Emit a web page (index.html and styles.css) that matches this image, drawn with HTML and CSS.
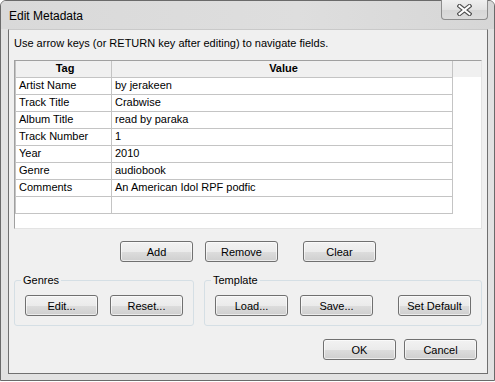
FILE: index.html
```html
<!DOCTYPE html>
<html>

<head>
  <title>Edit Metadata</title>
  <link rel="stylesheet" href="styles.css">
</head>

<body>
  <div class="window">
    <header class="titlebar">
      <span class="title">Edit Metadata</span>
      <button class="close-btn" title="Close">
        <svg width="15" height="12" viewBox="0 0 15 12">
          <path d="M2.5 2 L12.5 10 M12.5 2 L2.5 10" stroke="#505050" stroke-width="4.2" stroke-linecap="square" fill="none" />
          <path d="M2.5 2 L12.5 10 M12.5 2 L2.5 10" stroke="#fff" stroke-width="2" stroke-linecap="square" fill="none" />
        </svg>
      </button>
    </header>

    <main class="client">
      <p class="hint">Use arrow keys (or RETURN key after editing) to navigate fields.</p>

      <div class="grid-pane">
        <table class="grid">
          <thead>
            <tr>
              <th class="col-tag">Tag</th>
              <th class="col-value">Value</th>
            </tr>
          </thead>
          <tbody>
            <tr><td>Artist Name</td><td>by jerakeen</td></tr>
            <tr><td>Track Title</td><td>Crabwise</td></tr>
            <tr><td>Album Title</td><td>read by paraka</td></tr>
            <tr><td>Track Number</td><td>1</td></tr>
            <tr><td>Year</td><td>2010</td></tr>
            <tr><td>Genre</td><td>audiobook</td></tr>
            <tr><td>Comments</td><td>An American Idol RPF podfic</td></tr>
            <tr><td></td><td></td></tr>
          </tbody>
        </table>
      </div>

      <div class="row-actions">
        <button class="btn">Add</button>
        <button class="btn">Remove</button>
        <button class="btn btn-apart">Clear</button>
      </div>

      <div class="groups">
        <fieldset class="group group-genres">
          <legend>Genres</legend>
          <button class="btn">Edit...</button>
          <button class="btn">Reset...</button>
        </fieldset>
        <fieldset class="group group-template">
          <legend>Template</legend>
          <button class="btn">Load...</button>
          <button class="btn">Save...</button>
          <button class="btn btn-apart">Set Default</button>
        </fieldset>
      </div>

      <div class="row-dialog">
        <button class="btn">OK</button>
        <button class="btn">Cancel</button>
      </div>
    </main>
  </div>
</body>

</html>
```

FILE: styles.css
```css
:root {
  --frame: #e2e2e2;
  --title: #d9d9d9;
  --face: #f0f0f0;
  --grid-line: #c4c4c4;
  --btn-border: #707070;
}

body {
  margin: 0;
  background: #fff;
  font-family: "Liberation Sans", Arial, sans-serif;
  font-size: 11px;
  color: #000;
}

.window {
  width: 495px;
  height: 381px;
  box-sizing: border-box;
  border: 1px solid #6a6a6a;
  border-radius: 6px 6px 0 0;
  background: var(--frame);
  display: flex;
  flex-direction: column;
}

.titlebar {
  height: 28px;
  flex-shrink: 0;
  display: flex;
  align-items: flex-start;
  background: linear-gradient(to right, var(--title), #dedede 60%, #d6d6d6);
  border-radius: 5px 5px 0 0;
}

.title {
  font-size: 12px;
  padding: 8px 0 0 8px;
  line-height: 15px;
  flex-grow: 1;
}

.close-btn {
  width: 47px;
  height: 20px;
  margin: -1px 6px 0 0;
  padding: 0;
  border: 1px solid #8c8c8c;
  border-top: none;
  border-radius: 0 0 4px 4px;
  background: linear-gradient(#efefef, #e2e2e2 50%, #d6d6d6 51%, #dcdcdc);
  display: flex;
  align-items: center;
  justify-content: center;
}

.client {
  width: 480px;
  height: 345px;
  flex-shrink: 0;
  box-sizing: border-box;
  margin-left: 7px;
  border: 1px solid #707070;
  border-top-color: #c9c9c9;
  background: var(--face);
  padding: 0 5px;
  display: flex;
  flex-direction: column;
}

.hint {
  margin: 0;
  height: 30px;
  padding: 0 0 4px 0;
  box-sizing: border-box;
  display: flex;
  align-items: center;
}

.grid-pane {
  height: 169px;
  flex-shrink: 0;
  box-sizing: border-box;
  border: 1px solid #e3e3e3;
  border-top-color: #a0a0a0;
  border-left-color: #a0a0a0;
  background: linear-gradient(var(--face) 0 16px, #fff 16px);
}

.grid {
  border-collapse: collapse;
  table-layout: fixed;
  width: 438px;
  font-size: 11px;
}

.grid th,
.grid td {
  height: 16px;
  box-sizing: border-box;
  padding: 0 0 0 3px;
  line-height: 15px;
  border-right: 1px solid var(--grid-line);
  border-bottom: 1px solid var(--grid-line);
  white-space: nowrap;
  overflow: hidden;
  text-align: left;
  font-weight: normal;
}

.grid td {
  height: 17px;
}

.grid th {
  font-weight: bold;
  text-align: center;
  background: var(--face);
}

.grid tbody td:first-child,
.grid thead th:first-child {
  border-left: 1px solid var(--grid-line);
}

.col-tag {
  width: 96px;
}

.btn {
  width: 73px;
  height: 21px;
  padding: 0;
  border: 1px solid var(--btn-border);
  border-radius: 3px;
  background: linear-gradient(#f2f2f2, #ebebeb 50%, #dddddd 51%, #cfcfcf);
  box-shadow: inset 0 0 0 1px rgba(255, 255, 255, 0.6);
  font-family: inherit;
  font-size: 11px;
  color: #000;
}

.row-actions {
  display: flex;
  gap: 12px;
  margin: 12px 0 0 106px;
}

.btn-apart {
  margin-left: 13px;
}

.groups {
  display: flex;
  gap: 10px;
  margin-top: 12px;
}

.group {
  margin: 0;
  padding: 8px 9px 9px 10px;
  border: 1px solid #d5dfe5;
  border-radius: 3px;
  display: flex;
  gap: 12px;
}

.group legend {
  padding: 0 2px;
  margin-left: -4px;
  line-height: 13px;
}

.group-genres {
  width: 180px;
  box-sizing: border-box;
}

.group-template {
  width: 278px;
  box-sizing: border-box;
}

.row-dialog {
  display: flex;
  justify-content: flex-end;
  gap: 8px;
  margin-top: 13px;
  padding-right: 5px;
}
```
